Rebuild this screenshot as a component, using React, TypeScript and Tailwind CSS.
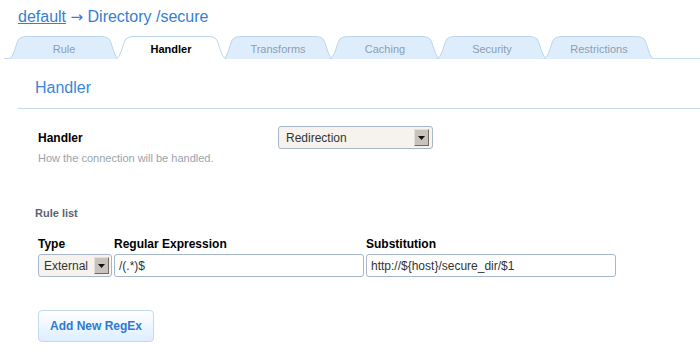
import { useState } from "react";

const tabs = ["Rule", "Handler", "Transforms", "Caching", "Security", "Restrictions"];

function TabShape({ active }: { active: boolean }) {
  return (
    <svg
      className="absolute inset-0"
      width="112"
      height="23"
      viewBox="0 0 112 23"
    >
      <path
        d="M0.5,23 C6,22.5 8,6 11,3 Q13.5,0.5 18,0.5 L94,0.5 Q98.5,0.5 101,3 C104,6 106,22.5 111.5,23"
        fill={active ? "#ffffff" : "#deedfc"}
        stroke="#bcd5ec"
        strokeWidth="1"
      />
    </svg>
  );
}

function SelectArrow() {
  return (
    <span className="flex h-[17px] w-[15px] items-center justify-center border border-t-[#e4e1db] border-l-[#e4e1db] border-r-[#6f6b64] border-b-[#6f6b64] bg-[#c7c3bb]">
      <svg width="7" height="4" viewBox="0 0 7 4">
        <path d="M0,0 L7,0 L3.5,4 Z" fill="#111" />
      </svg>
    </span>
  );
}

export default function App() {
  const [active, setActive] = useState(1);

  return (
    <div className="h-[357px] w-[700px] overflow-hidden bg-white font-['Liberation_Sans',Arial,sans-serif]">
      <div className="pl-[18px] pt-[6px] text-[16px] leading-[22px] text-[#3580d2]">
        <a className="underline">default</a>{" "}
        <span className="font-['DejaVu_Sans',sans-serif] text-[15px]">→</span> Directory /secure
      </div>

      <div className="ml-[4px] mt-[8px] flex border-b border-[#c6dbee] pl-[4px]">
        {tabs.map((t, i) => (
          <button
            key={t}
            onClick={() => setActive(i)}
            className={`relative -mb-px h-[23px] w-[112px] shrink-0 ${i > 0 ? "-ml-[5px]" : ""} ${i === active ? "z-10" : ""}`}
          >
            <TabShape active={i === active} />
            <span
              className={`relative block pt-[2px] text-[11px] leading-[20px] ${
                i === active ? "font-bold text-black" : "text-[#8d9db3]"
              }`}
            >
              {t}
            </span>
          </button>
        ))}
      </div>

      <div className="ml-[18px]">
        <h2 className="border-b border-[#c6dbee] pb-[10px] pl-[17px] pt-[19px] text-[16px] leading-[20px] text-[#3a86d8]">
          Handler
        </h2>

        <div className="ml-[20px] mt-[17px] flex">
          <div className="w-[240px]">
            <div className="mt-[5px] text-[12px] font-bold leading-[15px] text-black">Handler</div>
            <div className="mt-[6px] text-[11px] leading-[13px] text-[#9aa3ad]">
              How the connection will be handled.
            </div>
          </div>
          <div className="flex h-[23px] w-[155px] items-center justify-between rounded-[3px] border border-[#a7b6c8] bg-[#f6f3ef] pl-[7px] pr-[3px]">
            <span className="text-[12px] text-[#333]">Redirection</span>
            <SelectArrow />
          </div>
        </div>

        <div className="ml-[17px] mt-[41px] text-[11px] font-bold leading-[14px] text-[#5b6472]">
          Rule list
        </div>

        <div className="ml-[20px] mt-[17px]">
          <div className="flex gap-[2px] text-[12px] font-bold leading-[14px] text-black">
            <div className="w-[74px]">Type</div>
            <div className="w-[250px]">Regular Expression</div>
            <div>Substitution</div>
          </div>
          <div className="mt-[3px] flex gap-[2px]">
            <div className="flex h-[23px] w-[74px] items-center justify-between rounded-[3px] border border-[#a7b6c8] bg-[#f6f3ef] pl-[5px] pr-[2px]">
              <span className="text-[12px] text-[#333]">External</span>
              <SelectArrow />
            </div>
            <input
              defaultValue="/(.*)$"
              className="h-[23px] w-[250px] rounded-[3px] border border-[#a7b6c8] bg-white px-[4px] text-[12px] text-[#333] outline-none"
            />
            <input
              defaultValue="http://${host}/secure_dir/$1"
              className="h-[23px] w-[250px] rounded-[3px] border border-[#a7b6c8] bg-white px-[4px] text-[12px] text-[#333] outline-none"
            />
          </div>
        </div>

        <button className="ml-[20px] mt-[33px] h-[32px] w-[116px] rounded-[4px] border border-[#c3d9ee] bg-gradient-to-b from-white to-[#ddeeff] text-[12px] font-bold text-[#2f7ad0]">
          Add New RegEx
        </button>
      </div>
    </div>
  );
}
